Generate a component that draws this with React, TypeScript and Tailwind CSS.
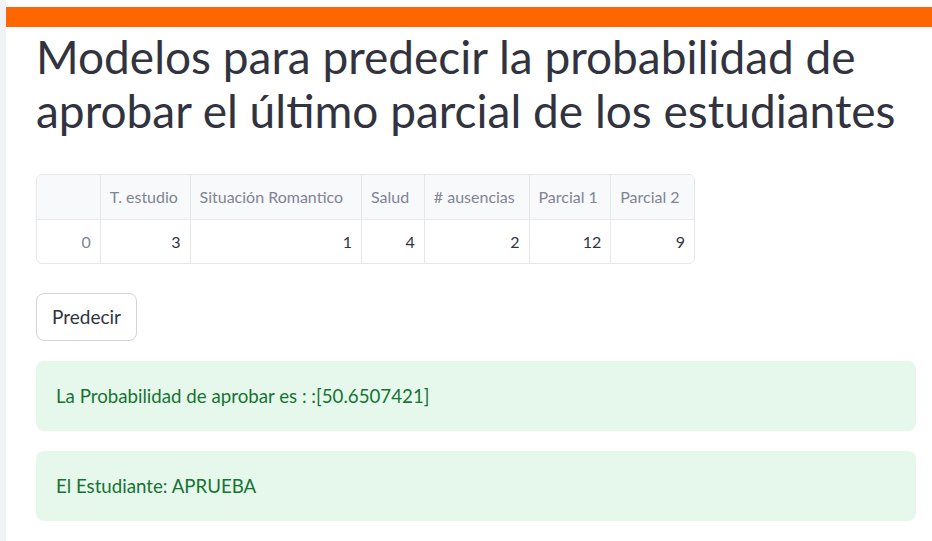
import React from "react";

const cols = [
  { h: "", v: "0", w: 64, idx: true },
  { h: "T. estudio", v: "3", w: 90 },
  { h: "Situación Romantico", v: "1", w: 172 },
  { h: "Salud", v: "4", w: 63 },
  { h: "# ausencias", v: "2", w: 105 },
  { h: "Parcial 1", v: "12", w: 82 },
  { h: "Parcial 2", v: "9", w: 83 },
];

export default function App() {
  return (
    <div
      className="flex w-[932px] h-[541px] bg-white overflow-hidden"
      style={{ fontFamily: "Lato, 'Open Sans', sans-serif" }}
    >
      <div className="w-[6px] shrink-0 bg-[#f0f2f6]" />
      <div className="flex-1 flex flex-col">
        <div className="h-[7px] bg-white" />
        <div className="h-[20px] bg-[#ff6600]" />
        <div className="pl-[30px] pr-[16px] flex flex-col">
          <h1 className="mt-[3px] text-[46px] leading-[54px] text-[#31333f] font-normal">
            Modelos para predecir la probabilidad de aprobar el último parcial de los estudiantes
          </h1>
          <div className="mt-[36px] w-[659px] h-[90px] border border-[#e6e7eb] rounded-[6px] overflow-hidden flex text-[16px]">
            {cols.map((c, i) => (
              <div
                key={i}
                className={`flex flex-col ${i < cols.length - 1 ? "border-r border-[#e6e7eb]" : ""}`}
                style={{ width: c.w }}
              >
                <div className="h-[45px] bg-[#f8f9fb] border-b border-[#e6e7eb] flex items-center px-[9px] text-[#808495] whitespace-nowrap">
                  {c.h}
                </div>
                <div
                  className={`flex-1 flex items-center justify-end px-[9px] ${c.idx ? "text-[#808495]" : "text-[#31333f]"}`}
                >
                  {c.v}
                </div>
              </div>
            ))}
          </div>
          <button className="mt-[29px] self-start w-[101px] h-[48px] border border-[#d3d4d8] rounded-[8px] bg-white text-[19px] text-[#31333f]">
            Predecir
          </button>
          <div className="mt-[20px] h-[70px] rounded-[8px] bg-[#e6f8ec] flex items-center px-[20px] text-[18.7px] text-[#177233]">
            La Probabilidad de aprobar es : :[50.6507421]
          </div>
          <div className="mt-[20px] h-[70px] rounded-[8px] bg-[#e6f8ec] flex items-center px-[20px] text-[18.7px] text-[#177233]">
            El Estudiante: APRUEBA
          </div>
        </div>
      </div>
    </div>
  );
}
